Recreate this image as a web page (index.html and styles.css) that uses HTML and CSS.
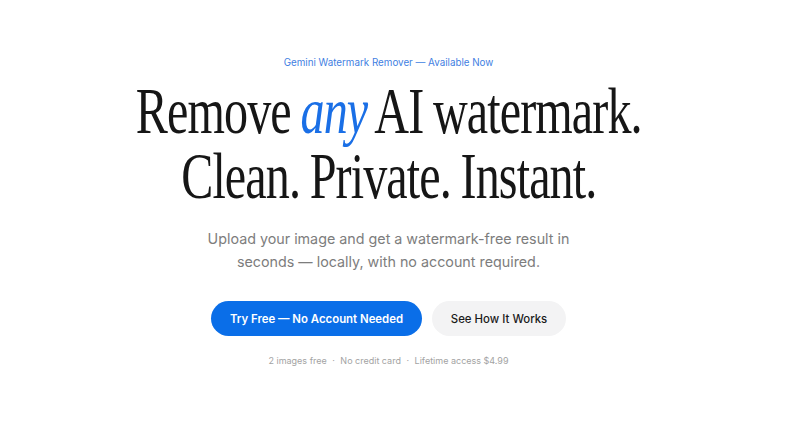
FILE: index.html
```html
<!DOCTYPE html>
<html lang="en">
<head>
<meta charset="utf-8">
<title>Gemini Watermark Remover</title>
<link rel="stylesheet" href="styles.css">
</head>
<body>
<main class="hero">
  <p class="eyebrow">Gemini Watermark Remover — Available Now</p>
  <h1 class="title">Remove <em class="accent">any</em> AI watermark.<br>Clean. Private. Instant.</h1>
  <p class="lead">Upload your image and get a watermark-free result in<br>seconds — locally, with no account required.</p>
  <div class="actions">
    <a class="btn btn-primary" href="#">Try Free — No Account Needed</a>
    <a class="btn btn-secondary" href="#">See How It Works</a>
  </div>
  <p class="fine">2 images free <span class="dot">·</span> No credit card <span class="dot">·</span> Lifetime access $4.99</p>
</main>
</body>
</html>
```
FILE: styles.css
```css
html, body {
  margin: 0;
  padding: 0;
  background: #ffffff;
}
body {
  font-family: Inter, "Noto Sans", sans-serif;
  color: #111;
}
.hero {
  display: flex;
  flex-direction: column;
  align-items: center;
  text-align: center;
  padding: 56px 23px 0 0;
}
.eyebrow {
  margin: 0;
  font-size: 9.8px;
  line-height: 14px;
  color: #3f80e2;
}
.title {
  margin: 9px 0 0;
  font-family: "Liberation Serif", serif;
  font-weight: 400;
  font-size: 65px;
  line-height: 65px;
  color: #161616;
  letter-spacing: -1.2px;
  word-spacing: -2px;
  transform: scaleX(0.74);
  white-space: nowrap;
}
.accent {
  font-style: italic;
  color: #1a6fe6;
}
.lead {
  margin: 18px 0 0;
  font-size: 14.3px;
  line-height: 23px;
  color: #7d7d7d;
}
.actions {
  display: flex;
  gap: 10px;
  margin-top: 28px;
}
.btn {
  display: flex;
  align-items: center;
  justify-content: center;
  height: 35px;
  border-radius: 18px;
  font-size: 11.4px;
  font-weight: 600;
  text-decoration: none;
}
.btn-primary {
  width: 211px;
  background: #0a6ee8;
  color: #fff;
}
.btn-secondary {
  width: 134px;
  background: #f3f3f4;
  color: #1a1a1a;
  font-weight: 500;
}
.fine {
  margin: 18px 0 0;
  font-size: 9px;
  line-height: 14px;
  color: #a3a3a3;
}
.dot {
  margin: 0 3px;
}
```
